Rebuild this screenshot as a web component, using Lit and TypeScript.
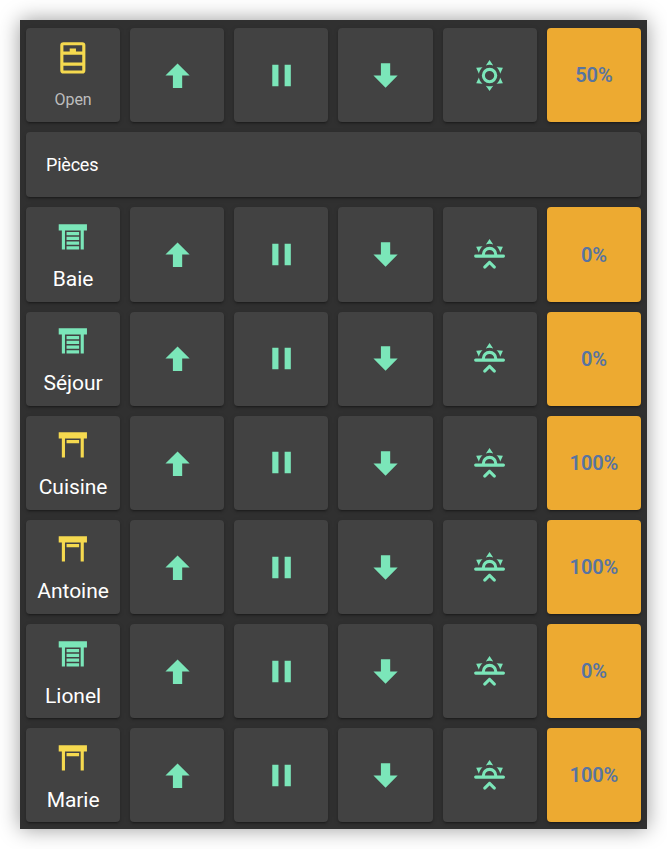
import { LitElement, html, css, svg } from "lit";
import { customElement, property } from "lit/decorators.js";

const RAYS_TOP =
  "M12,2L14.39,5.42C13.65,5.15 12.84,5 12,5C11.16,5 10.35,5.15 9.61,5.42L12,2M3.34,7L7.5,6.65C6.9,7.16 6.36,7.78 5.94,8.5C5.5,9.24 5.25,10 5.11,10.79L3.34,7M20.65,7L18.88,10.79C18.74,10 18.47,9.23 18.05,8.5C17.63,7.78 17.1,7.15 16.5,6.64L20.65,7";

const ICONS: Record<string, string> = {
  window:
    "M6,8H10V6H14V8H18V4H6V8M18,10H6V15H18V10M6,20H18V17H6V20M6,2H18A2,2 0 0,1 20,4V20A2,2 0 0,1 18,22H6A2,2 0 0,1 4,20V4A2,2 0 0,1 6,2Z",
  up: "M15,20H9V12H4.16L12,4.16L19.84,12H15V20Z",
  pause: "M14,19H18V5H14M6,19H10V5H6V19Z",
  down: "M9,4H15V12H19.84L12,19.84L4.16,12H9V4Z",
  sun:
    "M12,7A5,5 0 0,1 17,12A5,5 0 0,1 12,17A5,5 0 0,1 7,12A5,5 0 0,1 12,7M12,9A3,3 0 0,0 9,12A3,3 0 0,0 12,15A3,3 0 0,0 15,12A3,3 0 0,0 12,9" +
    RAYS_TOP +
    "M3.36,17L5.12,13.23C5.26,14 5.53,14.78 5.95,15.5C6.37,16.24 6.91,16.86 7.5,17.37L3.36,17M20.64,17L16.5,17.36C17.09,16.85 17.62,16.22 18.04,15.5C18.46,14.77 18.73,14 18.87,13.21L20.64,17M12,22L9.59,18.56C10.33,18.83 11.14,19 12,19C12.82,19 13.63,18.83 14.37,18.56L12,22Z",
  sunrise:
    "M3,12H7A5,5 0 0,1 12,7A5,5 0 0,1 17,12H21A1,1 0 0,1 22,13A1,1 0 0,1 21,14H3A1,1 0 0,1 2,13A1,1 0 0,1 3,12M15,12A3,3 0 0,0 12,9A3,3 0 0,0 9,12H15" +
    RAYS_TOP +
    "M12.71,16.3L15.82,19.41C16.21,19.8 16.21,20.43 15.82,20.82C15.43,21.21 14.8,21.21 14.41,20.82L12,18.41L9.59,20.82C9.2,21.21 8.57,21.21 8.18,20.82C7.79,20.43 7.79,19.8 8.18,19.41L11.29,16.3C11.5,16.1 11.74,16 12,16C12.26,16 12.5,16.1 12.71,16.3Z",
  closed:
    "M3 4H21V8H19V20H17V8H7V20H5V8H3V4M8 9H16V11H8V9M8 12H16V14H8V12M8 15H16V17H8V15M8 18H16V20H8V18Z",
  open: "M3 4H21V8H19V20H17V8H7V20H5V8H3V4M8 9H16V11H8V9Z",
};

interface Cover {
  name: string;
  position: number;
}

const ROOMS: Cover[] = [
  { name: "Baie", position: 0 },
  { name: "Séjour", position: 0 },
  { name: "Cuisine", position: 100 },
  { name: "Antoine", position: 100 },
  { name: "Lionel", position: 0 },
  { name: "Marie", position: 100 },
];

@customElement("cover-row")
export class CoverRow extends LitElement {
  @property() name = "";
  @property() icon = "closed";
  @property() preset = "sunrise";
  @property({ type: Number }) position = 0;
  @property({ type: Boolean }) small = false;

  static styles = css`
    :host {
      display: grid;
      grid-template-columns: repeat(6, minmax(0, 1fr));
      gap: 10px;
    }
    .card {
      box-sizing: border-box;
      aspect-ratio: 1;
      min-width: 0;
      display: flex;
      flex-direction: column;
      align-items: center;
      justify-content: center;
      border-radius: 4px;
      background: #424242;
      color: #7be6b9;
      box-shadow: 0 2px 2px rgba(0, 0, 0, 0.14), 0 1px 5px rgba(0, 0, 0, 0.12),
        0 3px 1px -2px rgba(0, 0, 0, 0.2);
    }
    .icon {
      display: block;
      width: 40%;
      aspect-ratio: 1;
      fill: currentColor;
    }
    .action .icon {
      width: 39.4%;
    }
    .action {
      padding-top: 0.4px;
    }
    .identity {
      justify-content: flex-start;
      padding-top: 10.5px;
    }
    .lit {
      color: #f5d94f;
    }
    .name {
      margin-top: 11.3px;
      font-size: 21px;
      line-height: 25px;
      letter-spacing: -0.05px;
      color: #fff;
      white-space: nowrap;
    }
    .name.small {
      margin-top: 14px;
      font-size: 16px;
      line-height: 20px;
      letter-spacing: -0.1px;
      color: #bdbdbd;
    }
    .level {
      background: #edaa31;
      color: #5874a0;
      font-size: 20px;
      line-height: 24px;
      letter-spacing: -0.1px;
      font-weight: 600;
    }
  `;

  private glyph(name: string) {
    return html`<svg class="icon" viewBox="0 0 24 24">${svg`<path d=${ICONS[name]} />`}</svg>`;
  }

  render() {
    return html`
      <div class="card identity ${this.position > 0 ? "lit" : ""}">
        ${this.glyph(this.icon)}
        <div class="name ${this.small ? "small" : ""}">${this.name}</div>
      </div>
      ${["up", "pause", "down", this.preset].map(
        (i) => html`<div class="card action">${this.glyph(i)}</div>`
      )}
      <div class="card level">${this.position}%</div>
    `;
  }
}

@customElement("app-root")
export class AppRoot extends LitElement {
  static styles = css`
    :host {
      display: block;
      box-sizing: border-box;
      height: 849px;
      padding: 20px;
      overflow: hidden;
      background: #fff;
      font-family: Roboto, sans-serif;
    }
    .panel {
      box-sizing: border-box;
      height: 809px;
      padding: 8px 6px;
      display: flex;
      flex-direction: column;
      gap: 10px;
      background: #303030;
      box-shadow: 0 0 20px rgba(0, 0, 0, 0.4);
    }
    .heading {
      box-sizing: border-box;
      height: 65.25px;
      flex: none;
      display: flex;
      align-items: center;
      padding: 0 20px;
      border-radius: 4px;
      background: #424242;
      color: #fff;
      font-size: 18px;
      letter-spacing: -0.012em;
      box-shadow: 0 2px 2px rgba(0, 0, 0, 0.14), 0 1px 5px rgba(0, 0, 0, 0.12),
        0 3px 1px -2px rgba(0, 0, 0, 0.2);
    }
  `;

  render() {
    return html`
      <div class="panel">
        <cover-row name="Open" icon="window" preset="sun" .position=${50} small></cover-row>
        <div class="heading">Pièces</div>
        ${ROOMS.map(
          (r) => html`<cover-row
            name=${r.name}
            icon=${r.position > 0 ? "open" : "closed"}
            .position=${r.position}
          ></cover-row>`
        )}
      </div>
    `;
  }
}
